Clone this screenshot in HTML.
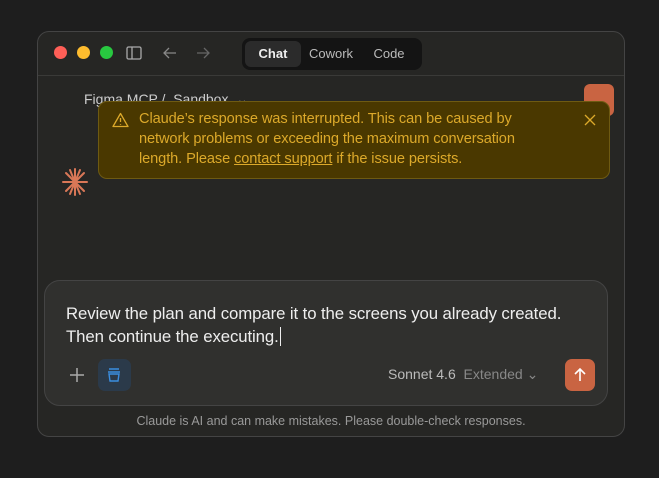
<!DOCTYPE html>
<html><head><style>
*{margin:0;padding:0;box-sizing:border-box}
body{width:659px;height:478px;background:#1e1e1e;font-family:"Liberation Sans",sans-serif;position:relative;overflow:hidden}
.win{position:absolute;left:37px;top:31px;width:588px;height:406px;background:#262624;border:1px solid #444;border-radius:12px;overflow:hidden}
.tb{position:absolute;left:0;top:0;right:0;height:44px;border-bottom:1px solid #3a3a38}
.dot{position:absolute;top:14px;width:13px;height:13px;border-radius:50%}
.tabs{position:absolute;left:204px;top:6px;width:180px;height:32px;background:#141414;border-radius:8px}
.tab{position:absolute;top:3px;height:26px;line-height:26px;font-size:13px;color:#bbb;text-align:center}
.banner{position:absolute;left:60px;top:69px;width:512px;height:78px;background:#4a3800;border:1px solid #6e5a12;border-radius:9px;color:#dca92a;font-size:14.6px;line-height:20px;padding:7px 0 0 40px;letter-spacing:-0.1px}
.input{position:absolute;left:6px;top:248px;width:564px;height:126px;background:#30302e;border:1px solid #444;border-radius:16px}
</style></head><body>
<div class="win">
 <div class="tb">
  <div class="dot" style="left:16px;background:#fe5f57"></div>
  <div class="dot" style="left:39px;background:#febc2e"></div>
  <div class="dot" style="left:62px;background:#28c840"></div>
  <svg style="position:absolute;left:88px;top:14px" width="16" height="14"><rect x="1" y="1" width="14" height="12" rx="1.5" fill="none" stroke="#aaa" stroke-width="1.3"/><line x1="6" y1="1" x2="6" y2="13" stroke="#aaa" stroke-width="1.3"/></svg>
  <svg style="position:absolute;left:124px;top:14px" width="16" height="14"><path d="M14 7H2M7 2L2 7l5 5" fill="none" stroke="#888" stroke-width="1.3"/></svg>
  <svg style="position:absolute;left:157px;top:14px" width="16" height="14"><path d="M2 7h12M9 2l5 5-5 5" fill="none" stroke="#666" stroke-width="1.3"/></svg>
  <div class="tabs">
   <div class="tab" style="left:3px;width:56px;background:#2b2b2b;border-radius:6px;color:#eee;font-weight:bold">Chat</div>
   <div class="tab" style="left:62px;width:54px">Cowork</div>
   <div class="tab" style="left:122px;width:50px">Code</div>
  </div>
 </div>
 <div style="position:absolute;left:46px;top:59px;font-size:14px;color:#ccc">Figma MCP / &nbsp;Sandbox &nbsp;⌄</div>
 <div style="position:absolute;left:546px;top:52px;width:30px;height:32px;background:#c96442;border-radius:6px"></div>
 <svg style="position:absolute;left:22px;top:134px" width="30" height="32" viewBox="0 0 30 32"><g stroke="#d97757" stroke-width="2" stroke-linecap="round">
  <line x1="15" y1="3" x2="15" y2="29"/><line x1="3" y1="16" x2="27" y2="16"/><line x1="6" y1="7" x2="24" y2="25"/><line x1="24" y1="7" x2="6" y2="25"/><line x1="10" y1="4" x2="20" y2="28"/><line x1="20" y1="4" x2="10" y2="28"/></g></svg>
 <div class="banner">
  <svg style="position:absolute;left:13px;top:10px" width="17" height="16"><path d="M8.5 1.5L16 14.5H1z M8.5 6v4 M8.5 12v0.8" fill="none" stroke="#dca92a" stroke-width="1.3" stroke-linejoin="round"/></svg>
  Claude’s response was interrupted. This can be caused by<br>network problems or exceeding the maximum conversation<br>length. Please <u>contact support</u> if the issue persists.
  <svg style="position:absolute;left:485px;top:12px" width="12" height="12"><path d="M1 1l10 10M11 1L1 11" stroke="#dca92a" stroke-width="1.3"/></svg>
 </div>
 <div class="input">
  <div style="position:absolute;left:21px;top:21px;font-size:16.8px;line-height:23px;color:#eee;letter-spacing:-0.1px">Review the plan and compare it to the screens you already created.<br>Then continue the executing.<span style="border-left:1px solid #eee;margin-left:1px"></span></div>
  <svg style="position:absolute;left:24px;top:86px" width="16" height="16"><path d="M8 1v14M1 8h14" stroke="#aaa" stroke-width="1.5"/></svg>
  <div style="position:absolute;left:53px;top:78px;width:33px;height:32px;background:#2b3a4a;border-radius:7px"></div>
  <svg style="position:absolute;left:61px;top:86px" width="16" height="16"><path d="M3 2h10M2 5h12M3 7h10l-1 7H4z" fill="none" stroke="#3b8ee0" stroke-width="1.4"/></svg>
  <div style="position:absolute;left:343px;top:85px;font-size:14px;color:#bbb">Sonnet 4.6 <span style="color:#888">&nbsp;Extended ⌄</span></div>
  <div style="position:absolute;left:520px;top:78px;width:30px;height:32px;background:#c96442;border-radius:7px"></div>
  <svg style="position:absolute;left:527px;top:86px" width="16" height="16"><path d="M8 14V2M3 7l5-5 5 5" fill="none" stroke="#fff" stroke-width="1.6"/></svg>
 </div>
 <div style="position:absolute;left:0;right:0;top:382px;text-align:center;font-size:12.5px;color:#999">Claude is AI and can make mistakes. Please double-check responses.</div>
</div>
</body></html>
